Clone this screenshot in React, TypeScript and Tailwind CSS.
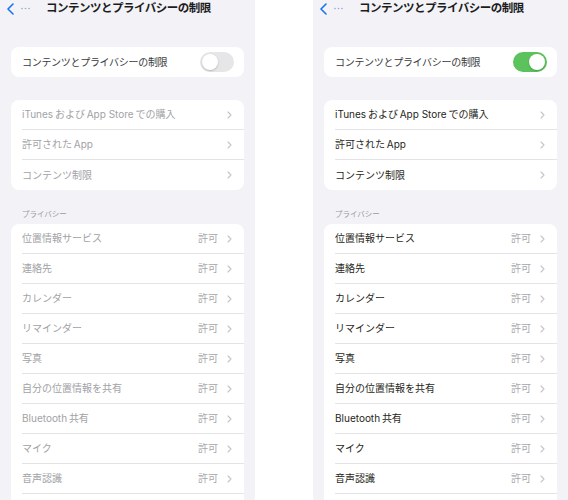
import React from 'react'

type Row = { label: string; value?: string }

const topRows: Row[] = [
    { label: 'iTunes\u2009および\u2009App Store\u2009での購入' },
    { label: '許可された\u2009App' },
    { label: 'コンテンツ制限' },
]

const privacyRows: Row[] = [
    { label: '位置情報サービス', value: '許可' },
    { label: '連絡先', value: '許可' },
    { label: 'カレンダー', value: '許可' },
    { label: 'リマインダー', value: '許可' },
    { label: '写真', value: '許可' },
    { label: '自分の位置情報を共有', value: '許可' },
    { label: 'Bluetooth\u2009共有', value: '許可' },
    { label: 'マイク', value: '許可' },
    { label: '音声認識', value: '許可' },
    { label: '' },
]

function Chevron() {
    return (
        <svg width="5" height="8" viewBox="0 0 5 8" className="shrink-0">
            <path d="M1 1l3 3-3 3" fill="none" stroke="#c4c4c8" strokeWidth="1.1" strokeLinecap="round" strokeLinejoin="round" />
        </svg>
    )
}

function Toggle({ on }: { on: boolean }) {
    return (
        <div className={on
            ? 'w-[34px] h-[20px] rounded-full bg-[#5cc25c] flex items-center justify-end px-[2px]'
            : 'w-[34px] h-[20px] rounded-full bg-[#e6e6e8] flex items-center justify-start px-[2px]'}>
            <div className="w-[16px] h-[16px] rounded-full bg-white shadow-[0_1px_2px_rgba(0,0,0,0.2)]" />
        </div>
    )
}

function ListRow({ row, enabled, last }: { row: Row; enabled: boolean; last: boolean }) {
    return (
        <div className="h-[30px] pl-[11px] flex">
            <div className={last
                ? 'flex-1 flex items-center pr-[12px]'
                : 'flex-1 flex items-center pr-[12px] border-b border-[#e4e4e7]'}>
                <span className={enabled ? 'flex-1 text-[10px] text-[#1f1f21]' : 'flex-1 text-[10px] text-[#a2a2a6]'}>
                    {row.label}
                </span>
                {row.value && <span className="text-[10px] text-[#a7a7ab] mr-[9px]">{row.value}</span>}
                {row.label && <Chevron />}
            </div>
        </div>
    )
}

function Screen({ enabled }: { enabled: boolean }) {
    return (
        <div className="w-[255px] h-[500px] bg-[#f2f2f7] overflow-hidden">

            {/* NAV BAR */}
            <div className="h-[17px] flex items-center pl-[7px]">
                <svg width="7" height="12" viewBox="0 0 7 12">
                    <path d="M6 1L1 6l5 5" fill="none" stroke="#1a73f0" strokeWidth="1.6" strokeLinecap="round" strokeLinejoin="round" />
                </svg>
                <svg width="9" height="3" viewBox="0 0 9 3" className="ml-[7px]">
                    <circle cx="1" cy="1.5" r="0.8" fill="#8fa6d6" />
                    <circle cx="4.5" cy="1.5" r="0.8" fill="#8fa6d6" />
                    <circle cx="8" cy="1.5" r="0.8" fill="#8fa6d6" />
                </svg>
                <span className="ml-[16px] text-[11.5px] font-bold text-[#1c1c1e] tracking-[-0.5px]">
                    コンテンツとプライバシーの制限
                </span>
            </div>

            {/* MAIN TOGGLE */}
            <div className="mt-[30px] mx-[11px] h-[30px] bg-white rounded-[8px] flex items-center pl-[11px] pr-[10px]">
                <span className="flex-1 text-[10px] text-[#3a3a3c] tracking-[-0.3px]">コンテンツとプライバシーの制限</span>
                <Toggle on={enabled} />
            </div>

            {/* STORE / CONTENT */}
            <div className="mt-[23px] mx-[11px] bg-white rounded-[8px] overflow-hidden">
                {topRows.map((r, i) => (
                    <ListRow key={r.label} row={r} enabled={enabled} last={i === topRows.length - 1} />
                ))}
            </div>

            {/* PRIVACY */}
            <div className="h-[34px] flex items-end pl-[22px] pb-[4px]">
                <span className="text-[7.5px] text-[#9a9aa0]">プライバシー</span>
            </div>
            <div className="mx-[11px] bg-white rounded-[8px] overflow-hidden">
                {privacyRows.map((r, i) => (
                    <ListRow key={i} row={r} enabled={enabled} last={i === privacyRows.length - 1} />
                ))}
            </div>
        </div>
    )
}

export default function App() {
    return (
        <div className="w-[568px] h-[500px] bg-white flex justify-between font-['Inter','Noto_Sans_CJK_JP',sans-serif] overflow-hidden">
            <Screen enabled={false} />
            <Screen enabled={true} />
        </div>
    )
}
